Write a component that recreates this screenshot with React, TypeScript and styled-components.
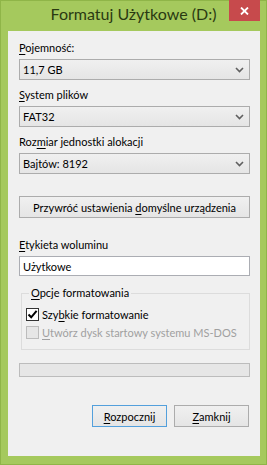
import React from "react";
import styled, {createGlobalStyle} from "styled-components";

const GlobalStyle = createGlobalStyle`
    html, body {
        margin: 0;
        padding: 0;
        background: #a5c95d;
    }
    body {
        font-family: Lato, "Noto Sans", sans-serif;
        font-size: 11px;
        color: #000;
    }
`;

const Window = styled.div`
    width: 267px;
    height: 465px;
    box-sizing: border-box;
    background: #a5c95d;
    border: 1px solid #8fb548;
    display: flex;
    flex-direction: column;
`;

const TitleBar = styled.div`
    height: 30px;
    display: flex;
    justify-content: center;
    position: relative;
`;

const Title = styled.div`
    font-size: 16px;
    line-height: 20px;
    margin-top: 3px;
    color: #2a3a12;
`;

const CloseButton = styled.div`
    position: absolute;
    top: -1px;
    right: 6px;
    width: 31px;
    height: 21px;
    background: #c74a4c;
    display: flex;
    align-items: center;
    justify-content: center;
`;

const Client = styled.div`
    margin: 0 6px 8px 7px;
    flex: 1;
    background: #f0f0f0;
    padding: 9px 10px 0 11px;
    display: flex;
    flex-direction: column;
`;

const Label = styled.div<{ $top?: number }>`
    height: 16px;
    line-height: 16px;
    margin-top: ${p => p.$top ?? 0}px;
    margin-bottom: 3px;
    white-space: nowrap;
`;

const Key = styled.span`
    text-decoration: underline;
    text-underline-offset: 2px;
`;

const Combo = styled.div`
    height: 21px;
    box-sizing: border-box;
    border: 1px solid #acacac;
    background: linear-gradient(#f0f0f0, #e5e5e5);
    display: flex;
    align-items: center;
    justify-content: space-between;
    padding: 0 5px 0 3px;
`;

const PushButton = styled.div<{ $default?: boolean; $top?: number; $width?: number }>`
    height: 22px;
    box-sizing: border-box;
    ${p => p.$width ? `width: ${p.$width}px;` : ""}
    margin-top: ${p => p.$top ?? 0}px;
    border: 1px solid ${p => p.$default ? "#53a0dc" : "#acacac"};
    background: linear-gradient(#f0f0f0, #e5e5e5);
    display: flex;
    align-items: center;
    justify-content: center;
    white-space: nowrap;
`;

const TextBox = styled.div`
    height: 20px;
    box-sizing: border-box;
    border: 1px solid #abadb3;
    background: #fff;
    display: flex;
    align-items: center;
    padding-left: 3px;
`;

const Group = styled.fieldset`
    margin: 9px 0 0 2px;
    padding: 4px 0 8px 4px;
    border: 1px solid #dcdcdc;
    min-width: 0;
`;

const Legend = styled.legend`
    padding: 0 2px;
    margin-left: 3px;
    line-height: 16px;
`;

const CheckRow = styled.div<{ $disabled?: boolean }>`
    height: 18px;
    display: flex;
    align-items: center;
    gap: 3px;
    color: ${p => p.$disabled ? "#a0a0a0" : "#000"};
    white-space: nowrap;
`;

const Box = styled.div<{ $disabled?: boolean }>`
    width: 13px;
    height: 13px;
    box-sizing: border-box;
    border: 1px solid ${p => p.$disabled ? "#bcbcbc" : "#333"};
    background: ${p => p.$disabled ? "#e6e6e6" : "#fff"};
    display: flex;
    align-items: center;
    justify-content: center;
`;

const Progress = styled.div`
    height: 14px;
    margin-top: 13px;
    box-sizing: border-box;
    border: 1px solid #bcbcbc;
    background: #e6e6e6;
`;

const ButtonRow = styled.div`
    display: flex;
    justify-content: flex-end;
    gap: 7px;
    margin-top: 28px;
    margin-right: 1px;
`;

const Chevron = () => (
    <svg width="9" height="6" viewBox="0 0 9 6">
        <path d="M1 1 L4.5 4.5 L8 1" fill="none" stroke="#606060" strokeWidth="1.6"/>
    </svg>
);

const App = () => {
    const combos = [
        {label: <><Key>P</Key>ojemność:</>, value: "11,7 GB"},
        {label: <><Key>S</Key>ystem plików</>, value: "FAT32"},
        {label: <>Roz<Key>m</Key>iar jednostki alokacji</>, value: "Bajtów: 8192"},
    ];

    return (
        <>
            <GlobalStyle/>
            <Window>
                <TitleBar>
                    <Title>Formatuj Użytkowe (D:)</Title>
                    <CloseButton>
                        <svg width="9" height="8" viewBox="0 0 9 8">
                            <path d="M1 0.5 L8 7.5 M8 0.5 L1 7.5" stroke="#fff" strokeWidth="1.8"/>
                        </svg>
                    </CloseButton>
                </TitleBar>
                <Client>
                    {combos.map((c, i) => (
                        <React.Fragment key={i}>
                            <Label $top={i === 0 ? 0 : 7}>{c.label}</Label>
                            <Combo>
                                <span>{c.value}</span>
                                <Chevron/>
                            </Combo>
                        </React.Fragment>
                    ))}
                    <PushButton $top={22}>
                        <span>Przywróć ustawienia <Key>d</Key>omyślne urządzenia</span>
                    </PushButton>
                    <Label $top={19}><Key>E</Key>tykieta woluminu</Label>
                    <TextBox>Użytkowe</TextBox>
                    <Group>
                        <Legend><Key>O</Key>pcje formatowania</Legend>
                        <CheckRow>
                            <Box>
                                <svg width="11" height="11" viewBox="0 0 11 11">
                                    <path d="M1.5 5.5 L4.2 8.3 L9.6 1.8" fill="none" stroke="#000" strokeWidth="2"/>
                                </svg>
                            </Box>
                            <span>Szy<Key>b</Key>kie formatowanie</span>
                        </CheckRow>
                        <CheckRow $disabled>
                            <Box $disabled/>
                            <span><Key>U</Key>twórz dysk startowy systemu MS-DOS</span>
                        </CheckRow>
                    </Group>
                    <Progress/>
                    <ButtonRow>
                        <PushButton $default $width={75}><span><Key>R</Key>ozpocznij</span></PushButton>
                        <PushButton $width={75}><span><Key>Z</Key>amknij</span></PushButton>
                    </ButtonRow>
                </Client>
            </Window>
        </>
    );
};

export default App;
